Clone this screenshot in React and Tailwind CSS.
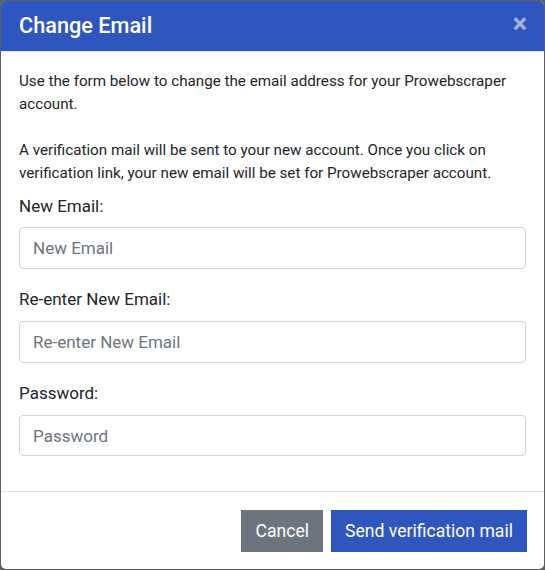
export default function App() {
  return (
    <div className="w-[545px] h-[570px] bg-[#5f5f5f] p-px font-['Roboto',sans-serif] text-[#212529]">
      <div className="bg-white rounded-[5px] overflow-hidden h-[568px] flex flex-col">
        {/* Header */}
        <div className="h-[51px] bg-[#2f56be] flex items-center justify-between pl-[18px] pr-[17px] border-b border-[#dee2e6]">
          <h5 className="text-[21.7px] font-medium text-white leading-none">Change Email</h5>
          <span className="text-[27px] font-bold leading-none text-white/55 -mt-[4px]">&times;</span>
        </div>

        {/* Body */}
        <div className="px-[18px] pt-[18px] pb-[35px] border-b border-[#dee2e6]">
          <p className="text-[15.2px] leading-[23px]">
            Use the form below to change the email address for your Prowebscraper account.
            <br />
            <br />
            A verification mail will be sent to your new account. Once you click on verification link, your new email will be set for Prowebscraper account.
          </p>

          <label className="block text-[17px] leading-[24px] mt-[9px] mb-[9px]">New Email:</label>
          <input
            type="email"
            placeholder="New Email"
            className="w-full h-[42px] px-[13px] text-[17px] border border-[#ced4da] rounded-[4px] placeholder:text-[#6c757d] outline-none"
          />

          <label className="block text-[17px] leading-[24px] mt-[18px] mb-[10px]">Re-enter New Email:</label>
          <input
            type="email"
            placeholder="Re-enter New Email"
            className="w-full h-[42px] px-[13px] text-[17px] border border-[#ced4da] rounded-[4px] placeholder:text-[#6c757d] outline-none"
          />

          <label className="block text-[17px] leading-[24px] mt-[18px] mb-[10px]">Password:</label>
          <input
            type="password"
            placeholder="Password"
            className="w-full h-[41px] px-[13px] text-[17px] border border-[#ced4da] rounded-[4px] placeholder:text-[#6c757d] outline-none"
          />
        </div>

        {/* Footer */}
        <div className="flex justify-end gap-[8px] px-[17px] pt-[18px]">
          <button className="h-[42px] px-[14px] bg-[#6c757d] text-white text-[17.6px]">Cancel</button>
          <button className="h-[42px] px-[14px] bg-[#2f56be] text-white text-[17.6px]">Send verification mail</button>
        </div>
      </div>
    </div>
  );
}
